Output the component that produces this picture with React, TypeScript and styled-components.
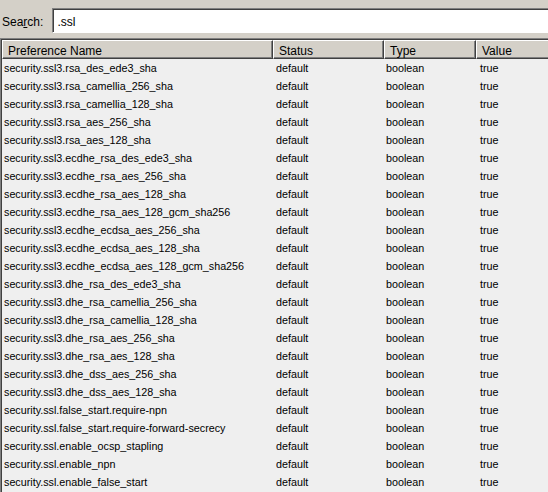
import styled, { createGlobalStyle } from "styled-components";

const GlobalStyle = createGlobalStyle`
  html, body {
    margin: 0;
    padding: 0;
    background: #d4d0c8;
    overflow: hidden;
  }
  body {
    font-family: "Liberation Sans", Arial, sans-serif;
    font-size: 10.75px;
    color: #000;
  }
`;

const Window = styled.div`
  width: 548px;
  height: 492px;
  display: flex;
  flex-direction: column;
  overflow: hidden;
`;

const SearchBar = styled.div`
  display: flex;
  align-items: center;
  gap: 9px;
  height: 33px;
  padding: 8px 0 0 2px;
  box-sizing: border-box;
`;

const Label = styled.label`
  white-space: nowrap;
  font-size: 12px;
  padding-top: 2px;
  u {
    text-decoration: underline;
  }
`;

const SearchInput = styled.div`
  flex: 1;
  height: 25px;
  margin-right: -20px;
  box-sizing: border-box;
  background: #fff;
  border-top: 1px solid #808080;
  border-left: 1px solid #808080;
  border-bottom: 1px solid #fff;
  box-shadow: inset 1px 1px 0 #404040;
  padding: 6px 0 0 4px;
  font-size: 12px;
`;

const Tree = styled.div`
  margin-top: 5px;
  width: 600px;
  flex: 1;
  border-top: 1px solid #808080;
  border-left: 1px solid #808080;
  box-shadow: inset 1px 1px 0 #404040;
  background: #efefef;
  padding: 1px 0 0 1px;
`;

const Columns = "271px 111px 92px 1fr";

const HeaderRow = styled.div`
  display: grid;
  grid-template-columns: ${Columns};
  height: 19px;
`;

const HeaderCell = styled.div`
  background: #d4d0c8;
  border-top: 1px solid #fff;
  border-left: 1px solid #fff;
  border-right: 1px solid #404040;
  border-bottom: 1px solid #404040;
  box-shadow: inset -1px -1px 0 #808080;
  padding: 3px 0 0 5px;
  box-sizing: border-box;
  font-size: 12px;
`;

const Row = styled.div`
  display: grid;
  grid-template-columns: ${Columns};
  height: 18px;
  align-items: center;
`;

const Cell = styled.div<{ $pad: number }>`
  padding-left: ${(p) => p.$pad}px;
  white-space: nowrap;
  overflow: hidden;
`;

const names = [
  "security.ssl3.rsa_des_ede3_sha",
  "security.ssl3.rsa_camellia_256_sha",
  "security.ssl3.rsa_camellia_128_sha",
  "security.ssl3.rsa_aes_256_sha",
  "security.ssl3.rsa_aes_128_sha",
  "security.ssl3.ecdhe_rsa_des_ede3_sha",
  "security.ssl3.ecdhe_rsa_aes_256_sha",
  "security.ssl3.ecdhe_rsa_aes_128_sha",
  "security.ssl3.ecdhe_rsa_aes_128_gcm_sha256",
  "security.ssl3.ecdhe_ecdsa_aes_256_sha",
  "security.ssl3.ecdhe_ecdsa_aes_128_sha",
  "security.ssl3.ecdhe_ecdsa_aes_128_gcm_sha256",
  "security.ssl3.dhe_rsa_des_ede3_sha",
  "security.ssl3.dhe_rsa_camellia_256_sha",
  "security.ssl3.dhe_rsa_camellia_128_sha",
  "security.ssl3.dhe_rsa_aes_256_sha",
  "security.ssl3.dhe_rsa_aes_128_sha",
  "security.ssl3.dhe_dss_aes_256_sha",
  "security.ssl3.dhe_dss_aes_128_sha",
  "security.ssl.false_start.require-npn",
  "security.ssl.false_start.require-forward-secrecy",
  "security.ssl.enable_ocsp_stapling",
  "security.ssl.enable_npn",
  "security.ssl.enable_false_start",
];

function App() {
  return (
    <Window>
      <GlobalStyle />
      <SearchBar>
        <Label>
          Sea<u>r</u>ch:
        </Label>
        <SearchInput>.ssl</SearchInput>
      </SearchBar>
      <Tree>
        <HeaderRow>
          <HeaderCell>Preference Name</HeaderCell>
          <HeaderCell>Status</HeaderCell>
          <HeaderCell>Type</HeaderCell>
          <HeaderCell>Value</HeaderCell>
        </HeaderRow>
        {names.map((n) => (
          <Row key={n}>
            <Cell $pad={2}>{n}</Cell>
            <Cell $pad={3}>default</Cell>
            <Cell $pad={2}>boolean</Cell>
            <Cell $pad={4}>true</Cell>
          </Row>
        ))}
      </Tree>
    </Window>
  );
}

export default App;
